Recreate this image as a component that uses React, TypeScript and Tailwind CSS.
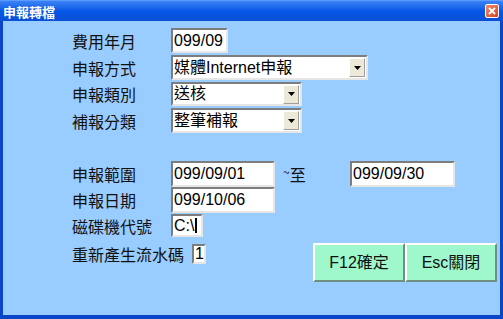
import React from "react";

const cjk = { fontFamily: '"Noto Sans CJK TC", "Noto Sans CJK SC", sans-serif' };
const mixed = { fontFamily: '"Liberation Sans", "Noto Sans CJK TC", sans-serif' };

const sunken =
  "bg-white border-2 border-t-[#7d7d7d] border-l-[#7d7d7d] border-b-[#e6e6e6] border-r-[#e6e6e6] flex items-center pl-[1px] text-[16px] text-black leading-none overflow-hidden whitespace-nowrap";

const Label = ({ children, w = "w-[99px]" }: { children: React.ReactNode; w?: string }) => (
  <div className={`${w} shrink-0 text-[16px] text-[#111] leading-none`} style={cjk}>
    {children}
  </div>
);

const Field = ({ value, w, caret }: { value: string; w: string; caret?: boolean }) => (
  <div className={`${sunken} ${w} h-full`} style={mixed}>
    {value}
    {caret && <span className="ml-[1px] w-[2px] h-[15px] bg-black" />}
  </div>
);

const Select = ({ value, w }: { value: string; w: string }) => (
  <div className={`${sunken} ${w} h-full pr-[1px] justify-between`} style={mixed}>
    <span>{value}</span>
    <div className="w-[16px] h-[19px] bg-[#ece9d8] border border-t-white border-l-white border-b-[#a0a0a0] border-r-[#a0a0a0] flex items-center justify-center">
      <svg width="7" height="4" viewBox="0 0 7 4">
        <path d="M0 0h7L3.5 4z" fill="#000" />
      </svg>
    </div>
  </div>
);

const Btn = ({ children }: { children: React.ReactNode }) => (
  <button
    className="w-[92px] h-[39px] bg-[#9ef8cc] border-2 border-t-white border-l-white border-b-[#6f8f80] border-r-[#6f8f80] text-[16px] text-[#111] flex items-center justify-center"
    style={mixed}
  >
    {children}
  </button>
);

export default function App() {
  return (
    <div className="w-[503px] h-[319px] flex flex-col bg-[#0a46c8] select-none">
      {/* title bar */}
      <div className="h-[21px] shrink-0 flex items-center justify-between pl-[3px] pr-[4px] bg-gradient-to-b from-[#3b83f4] via-[#0657e6] to-[#0a4fd6] border-t border-[#5a9cff]">
        <span className="text-white text-[13px] font-bold leading-none" style={cjk}>
          申報轉檔
        </span>
        <div className="w-[14px] h-[14px] rounded-[2px] border border-white bg-gradient-to-br from-[#f08a6a] to-[#d8401c] flex items-center justify-center">
          <svg width="8" height="8" viewBox="0 0 8 8">
            <path d="M1 1l6 6M7 1L1 7" stroke="#fff" strokeWidth="1.8" />
          </svg>
        </div>
      </div>

      {/* body */}
      <div className="flex-1 bg-[#99ccff] mx-[3px] mb-[4px] pl-[69px] flex flex-col">
        <div className="mt-[7px] h-[25px] flex items-center">
          <Label>費用年月</Label>
          <Field value="099/09" w="w-[57px]" />
        </div>
        <div className="mt-[2px] h-[25px] flex items-center">
          <Label>申報方式</Label>
          <Select value="媒體Internet申報" w="w-[197px]" />
        </div>
        <div className="mt-[2px] h-[24px] flex items-center">
          <Label>申報類別</Label>
          <Select value="送核" w="w-[131px]" />
        </div>
        <div className="mt-[2px] h-[25px] flex items-center">
          <Label>補報分類</Label>
          <Select value="整筆補報" w="w-[131px]" />
        </div>

        <div className="mt-[28px] h-[26px] flex items-center">
          <Label>申報範圍</Label>
          <Field value="099/09/01" w="w-[104px]" />
          <span className="ml-[8px] w-[67px] text-[16px] text-[#111] leading-none" style={cjk}>
            <span className="text-[12px] align-top">~</span>至
          </span>
          <Field value="099/09/30" w="w-[105px]" />
        </div>
        <div className="h-[26px] flex items-center">
          <Label>申報日期</Label>
          <Field value="099/10/06" w="w-[104px]" />
        </div>

        <div className="flex items-start">
          <div className="flex flex-col">
            <div className="mt-[1px] h-[23px] flex items-center">
              <Label>磁碟機代號</Label>
              <Field value="C:\" w="w-[32px]" caret />
            </div>
            <div className="mt-[7px] h-[20px] flex items-center">
              <Label w="w-[120px]">重新產生流水碼</Label>
              <Field value="1" w="w-[14px]" />
            </div>
          </div>
          <div className="ml-auto mr-[3px] mt-[30px] flex">
            <Btn>F12確定</Btn>
            <Btn>Esc關閉</Btn>
          </div>
        </div>
      </div>
    </div>
  );
}
